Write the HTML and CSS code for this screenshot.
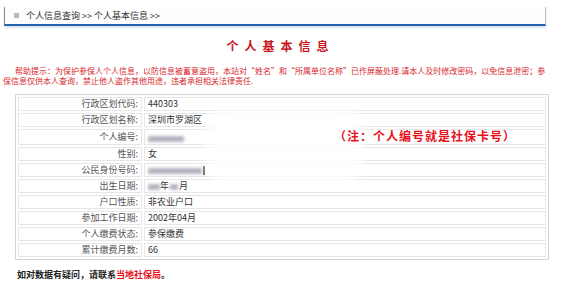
FILE: index.html
```html
<!DOCTYPE html>
<html lang="zh-CN">
<head>
    <meta charset="UTF-8">
    <title>个人基本信息</title>
    <link rel="stylesheet" href="styles.css">
</head>
<body>
    <div class="crumb">
        <span class="crumb-icon"></span>
        <span>个人信息查询 &gt;&gt; 个人基本信息 &gt;&gt;</span>
    </div>

    <h1 class="title">个人基本信息</h1>

    <p class="help">帮助提示：为保护参保人个人信息，以防信息被蓄意盗用，本站对“姓名”和“所属单位名称”已作屏蔽处理.请本人及时修改密码，以免信息泄密；参<br>保信息仅供本人查询，禁止他人盗作其他用途，违者承担相关法律责任.</p>

    <div class="info-wrap">
        <table class="info">
            <tr><td class="label">行政区划代码:</td><td class="value">440303</td></tr>
            <tr><td class="label">行政区划名称:</td><td class="value">深圳市罗湖区</td></tr>
            <tr><td class="label">个人编号:</td><td class="value"><span class="blur w36"></span><span class="note">（注：个人编号就是社保卡号）</span></td></tr>
            <tr><td class="label">性别:</td><td class="value">女</td></tr>
            <tr><td class="label">公民身份号码:</td><td class="value"><span class="blur w54"></span><span class="mark"></span></td></tr>
            <tr><td class="label">出生日期:</td><td class="value"><span class="blur w12"></span>年<span class="blur w8"></span>月</td></tr>
            <tr><td class="label">户口性质:</td><td class="value">非农业户口</td></tr>
            <tr><td class="label">参加工作日期:</td><td class="value">2002年04月</td></tr>
            <tr><td class="label">个人缴费状态:</td><td class="value">参保缴费</td></tr>
            <tr><td class="label">累计缴费月数:</td><td class="value">66</td></tr>
        </table>
        <div class="smudge"></div>
    </div>

    <p class="footer">如对数据有疑问，请联系<span class="red">当地社保局</span>。</p>
</body>
</html>
```

FILE: styles.css
```css
body {
    margin: 0;
    width: 561px;
    font-family: "Noto Sans CJK SC", "DejaVu Sans", sans-serif;
    background-color: #ffffff;
    color: #333;
}
.crumb {
    display: flex;
    align-items: center;
    height: 17px;
    margin: 7px 15px 0 4px;
    padding-left: 9px;
    border-left: 1px solid #888;
    border-right: 1px solid #bbb;
    border-bottom: 2px solid #2461ad;
    box-shadow: 0 2px 2px #dfe6f0;
    background-color: #fdfdfd;
    font-size: 9px;
    color: #333;
}
.crumb-icon {
    width: 5px;
    height: 5px;
    margin-right: 7px;
    background-color: #b8b8c0;
}
.title {
    margin: 12px 0 0 0;
    text-align: center;
    font-size: 12px;
    line-height: 16px;
    font-weight: bold;
    letter-spacing: 6px;
    color: #c8161d;
}
.help {
    margin: 12px 0 0 0;
    padding: 0 3px;
    text-indent: 12px;
    font-size: 8px;
    line-height: 10px;
    color: #d8262c;
    white-space: nowrap;
}
.info-wrap {
    position: relative;
    margin: 8px 12px 0 15px;
}
.info {
    width: 100%;
    border: 1px solid #d4d4d4;
    border-spacing: 2px;
    font-size: 9px;
    color: #333;
}
.info td {
    height: 12px;
    padding: 0 3px;
    border: 1px solid #e6e6e6;
    line-height: 12px;
    white-space: nowrap;
}
.info .label {
    width: 116px;
    text-align: right;
    color: #555;
}
.blur {
    display: inline-block;
    height: 6px;
    vertical-align: middle;
    background-color: #b4b4c0;
    filter: blur(1.5px);
}
.w36 { width: 36px; }
.w54 { width: 54px; }
.w12 { width: 12px; }
.w8 { width: 8px; margin: 0 1px; }
.mark {
    display: inline-block;
    width: 2px;
    height: 9px;
    margin-left: 1px;
    vertical-align: middle;
    background-color: #666;
    filter: blur(0.6px);
}
.note {
    position: relative;
    z-index: 2;
    margin-left: 150px;
    font-size: 12px;
    font-weight: bold;
    letter-spacing: 1px;
    color: #e8101a;
}
.smudge {
    position: absolute;
    left: 192px;
    top: 14px;
    width: 155px;
    height: 76px;
    border-radius: 20px;
    background-color: #ffffff;
    filter: blur(5px);
    opacity: 0.9;
    z-index: 1;
}
.footer {
    margin: 8px 0 0 17px;
    font-size: 9px;
    font-weight: bold;
    color: #222;
}
.red {
    color: #e8101a;
}
```
